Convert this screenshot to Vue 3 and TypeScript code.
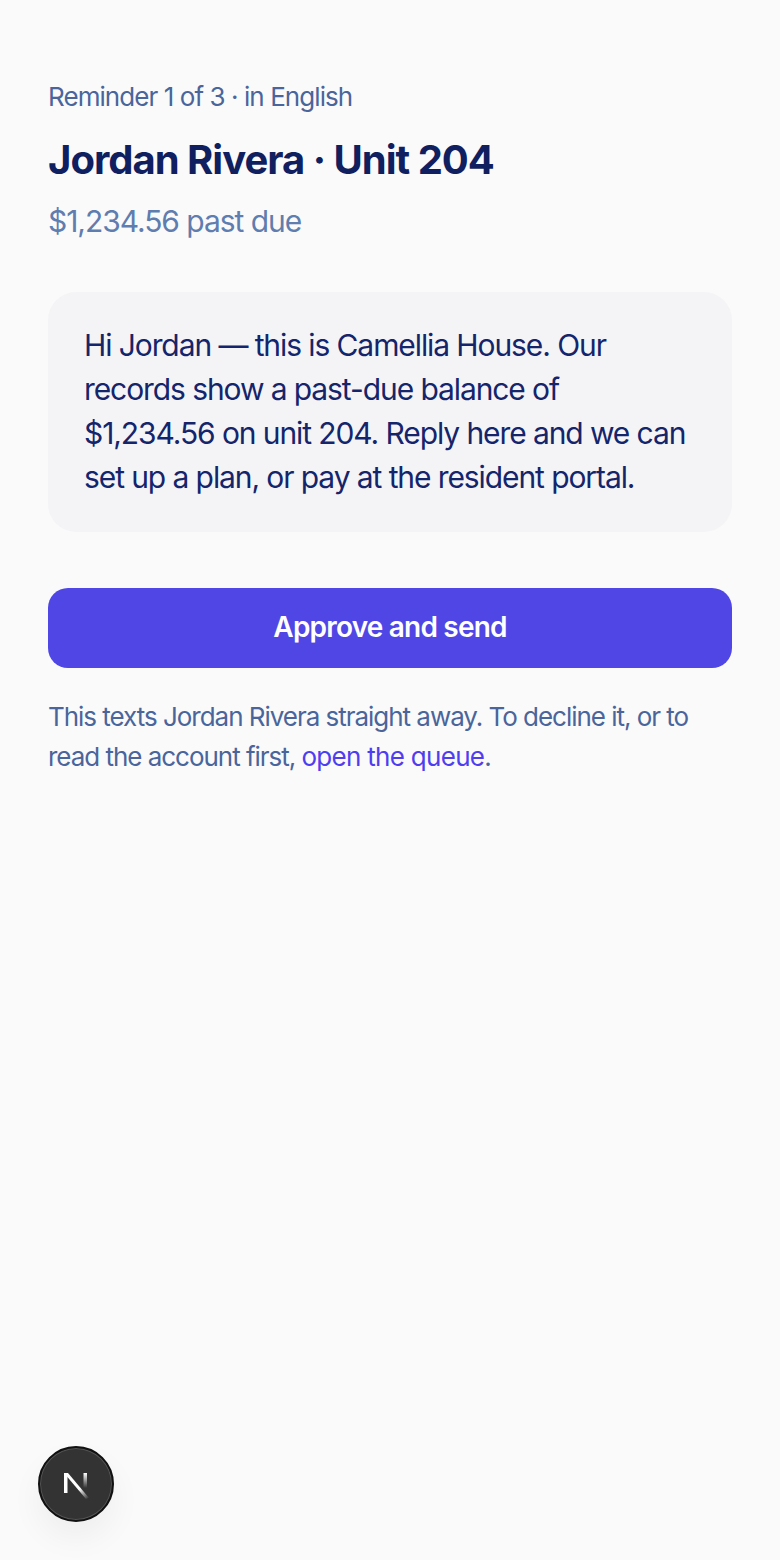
<script setup lang="ts">
const name = 'Jordan Rivera'
const unit = 204
const balance = '$1,234.56'
</script>

<template>
  <main class="page">
    <header class="head">
      <div class="eyebrow">Reminder 1 of 3 · in English</div>
      <h1>{{ name }} · Unit {{ unit }}</h1>
      <div class="amount">{{ balance }} past due</div>
    </header>

    <p class="message">
      Hi Jordan — this is Camellia House. Our records show a past-due balance of {{ balance }} on unit
      {{ unit }}. Reply here and we can set up a plan, or pay at the resident portal.
    </p>

    <button class="approve" type="button">Approve and send</button>

    <p class="note">
      This texts {{ name }} straight away. To decline it, or to read the account first,
      <a href="#" @click.prevent>open the queue</a>.
    </p>
  </main>

  <button class="dev-badge" type="button" aria-label="Open Next.js Dev Tools">
    <svg width="30" height="30" viewBox="0 0 30 30" fill="none">
      <defs>
        <linearGradient id="n-diag" x1="8" y1="8" x2="27" y2="30" gradientUnits="userSpaceOnUse">
          <stop offset="0.55" stop-color="#fff" />
          <stop offset="1" stop-color="#fff" stop-opacity="0" />
        </linearGradient>
        <linearGradient id="n-right" x1="24" y1="4" x2="24" y2="19" gradientUnits="userSpaceOnUse">
          <stop offset="0" stop-color="#fff" />
          <stop offset="1" stop-color="#fff" stop-opacity="0" />
        </linearGradient>
      </defs>
      <path d="M3 4h3.5v20H3z" fill="#fff" />
      <path d="M3 4h4L28 29l-3 1z" fill="url(#n-diag)" />
      <path d="M22.5 4H26v15h-3.5z" fill="url(#n-right)" />
    </svg>
  </button>
</template>

<style>
body {
  background: #fafafa;
}
</style>

<style scoped>
.page {
  display: flex;
  flex-direction: column;
  min-height: 1560px;
  box-sizing: border-box;
  padding: 80px 48px;
  background: #fafafa;
  font-family: Inter, "Liberation Sans", sans-serif;
  color: #0f1f5f;
}

.head {
  display: flex;
  flex-direction: column;
}

.eyebrow {
  font-size: 26px;
  line-height: 34px;
  letter-spacing: -0.93px;
  color: #4a659b;
}

h1 {
  margin: 20px 0 0;
  font-size: 40px;
  line-height: 52px;
  font-weight: 700;
  letter-spacing: -1px;
  color: #0f1f5f;
}

.amount {
  margin-top: 15px;
  font-size: 30px;
  line-height: 40px;
  letter-spacing: -1.05px;
  color: #5f7dae;
}

.message {
  margin: 51px 0 0;
  padding: 31px 36px 33px;
  background: #f4f4f6;
  border-radius: 28px;
  font-size: 30px;
  line-height: 44px;
  letter-spacing: -1.09px;
  color: #14256b;
}

.approve {
  margin-top: 56px;
  height: 80px;
  padding: 0 0 2px;
  border: 0;
  border-radius: 20px;
  background: #4f46e5;
  color: #fff;
  font-family: inherit;
  font-size: 28px;
  font-weight: 600;
  letter-spacing: -0.8px;
}

.note {
  margin: 29px 0 0;
  font-size: 26px;
  line-height: 40px;
  letter-spacing: -1.03px;
  color: #4a659b;
}

.note a {
  color: #4f3df0;
  letter-spacing: -0.7px;
  text-decoration: none;
}

.dev-badge {
  position: fixed;
  left: 38px;
  bottom: 38px;
  display: flex;
  align-items: center;
  justify-content: center;
  width: 76px;
  height: 76px;
  padding: 0;
  border: 2px solid #111;
  border-radius: 50%;
  background: #333;
  box-shadow: inset 0 0 0 1px #555, 0 16px 32px rgba(0, 0, 0, 0.05);
}
</style>
